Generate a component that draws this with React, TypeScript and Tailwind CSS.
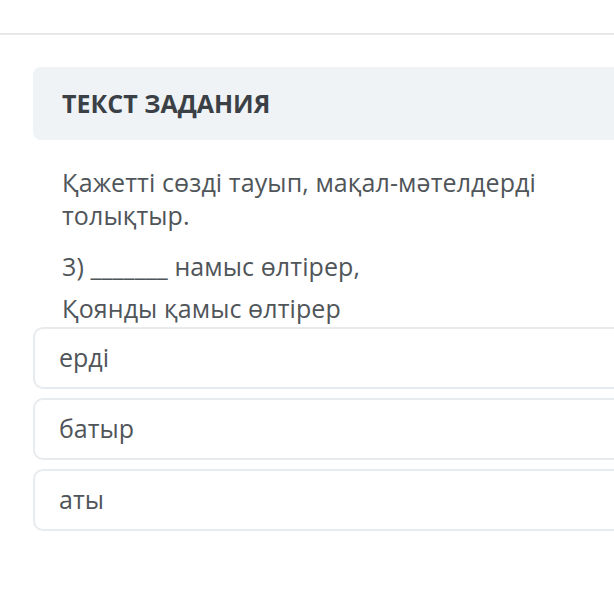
const options = ["ерді", "батыр", "аты"];

export default function App() {
  return (
    <div
      className="w-[614px] h-[612px] overflow-hidden bg-white text-[#4f5559]"
      style={{ fontFamily: '"Open Sans", "Noto Sans", sans-serif' }}
    >
      <div className="h-[35px] border-b-2 border-[#e6e8ea]" />
      <div className="pl-[33px] pt-[32px] w-[660px]">
        <div className="h-[73px] rounded-lg bg-[#eff3f5] pl-[29px] flex items-center">
          <h2 className="text-[25px] font-bold text-[#3a4045] tracking-[0px]">ТЕКСТ ЗАДАНИЯ</h2>
        </div>
        <div className="pl-[29px] pt-[26px] text-[25px] leading-[33px] tracking-[0.1px]">
          <p className="max-w-[520px]">Қажетті сөзді тауып, мақал-мәтелдерді толықтыр.</p>
          <p className="mt-[18px]">3) _______ намыс өлтірер,</p>
          <p className="mt-[9px]">Қоянды қамыс өлтірер</p>
        </div>
        <div className="mt-[2px] flex flex-col gap-[9px]">
          {options.map((o) => (
            <div
              key={o}
              className="h-[62px] rounded-[10px] border-2 border-[#e8ebed] pl-[24px] flex items-center text-[25px]"
            >
              {o}
            </div>
          ))}
        </div>
      </div>
    </div>
  );
}
